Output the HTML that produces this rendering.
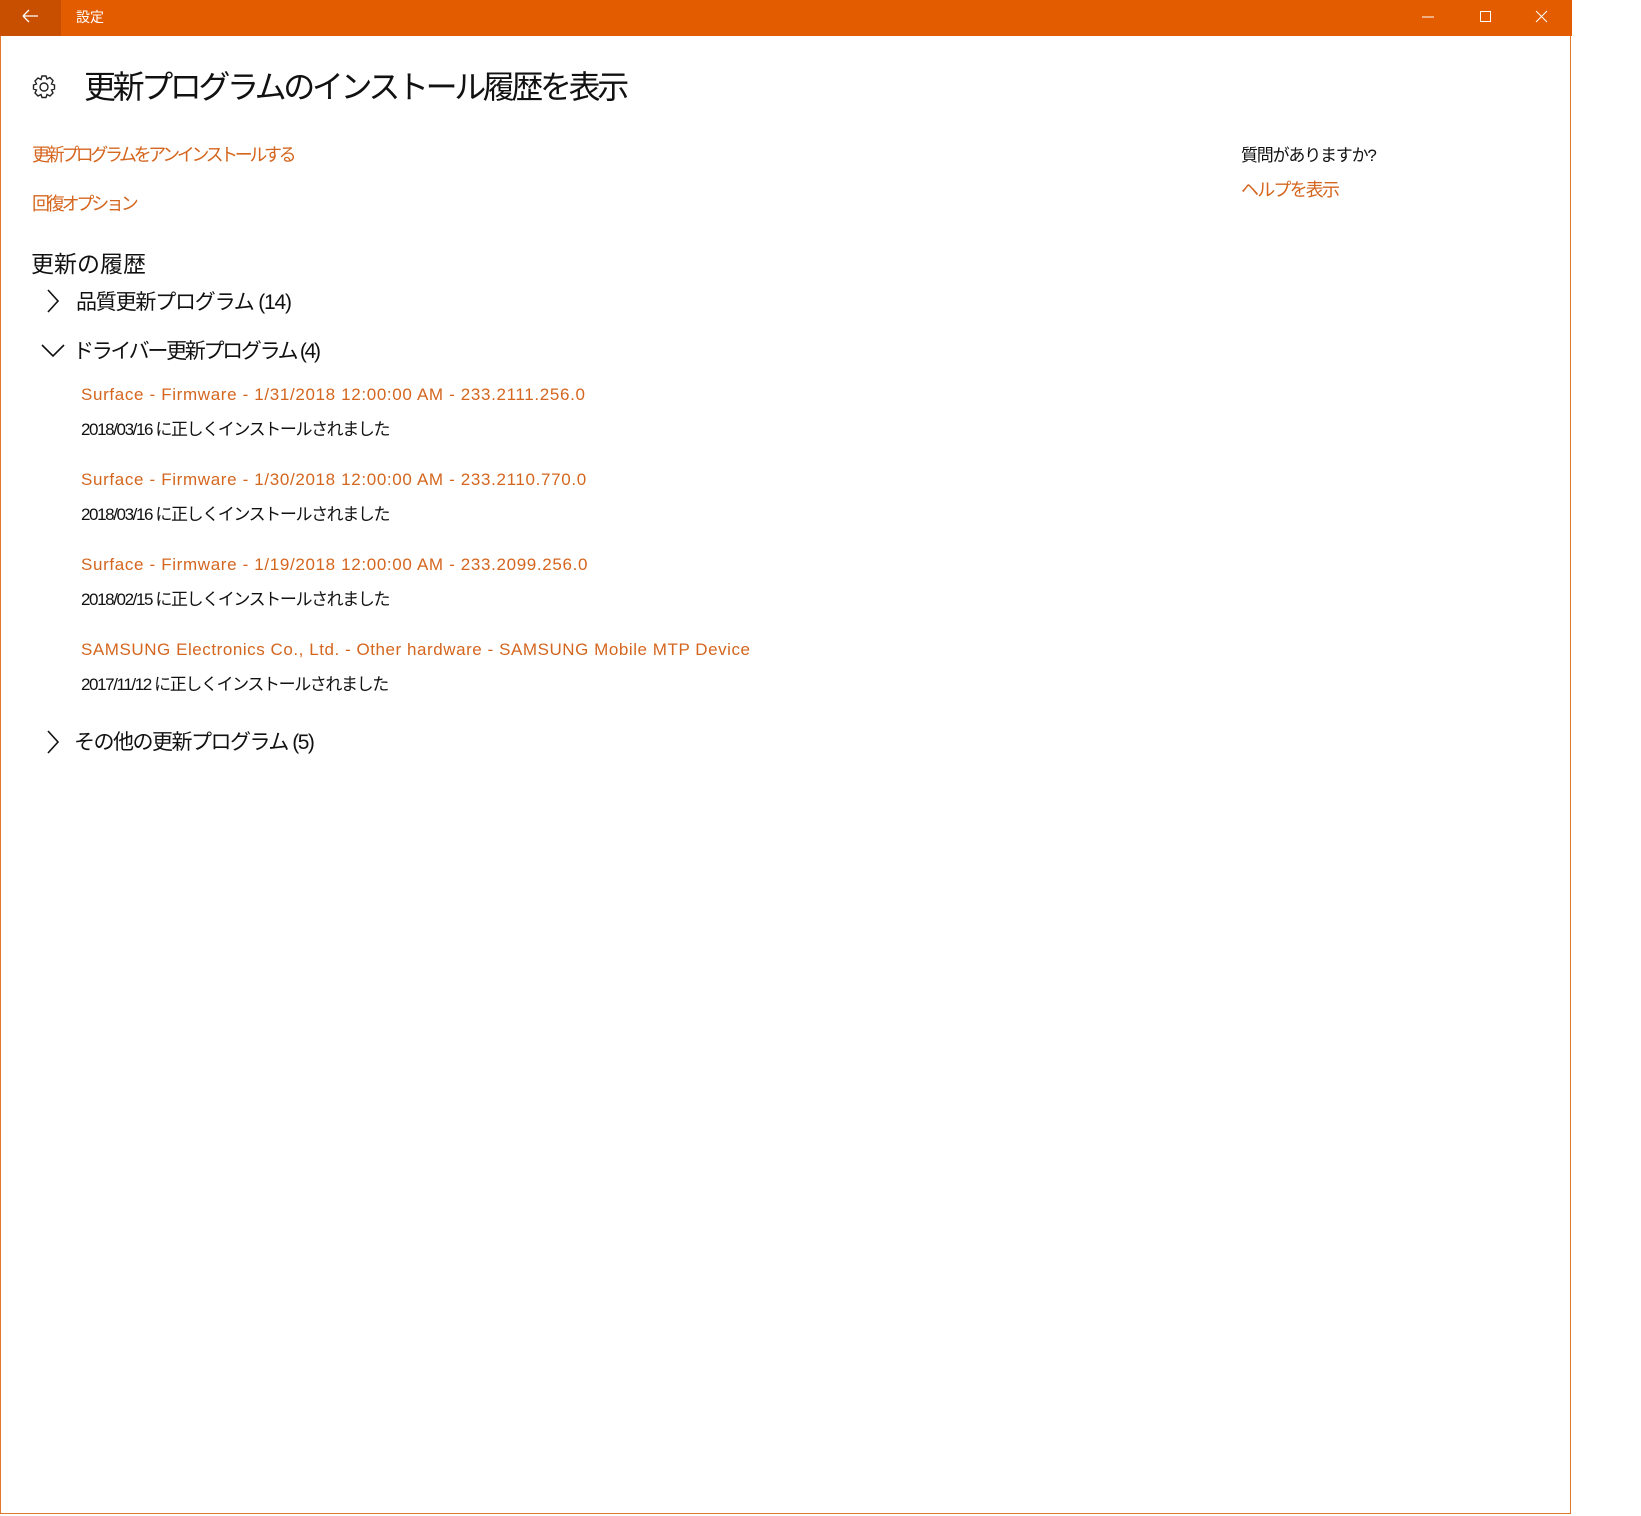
<!DOCTYPE html>
<html><head><meta charset="utf-8"><style>
body{margin:0;width:1641px;height:1516px;background:#fff;position:relative;overflow:hidden;font-family:"Liberation Sans","Noto Sans CJK JP",sans-serif;color:#111}
.win{position:absolute;left:0;top:0;width:1571px;height:1514px;border:1px solid #e2782d;border-top:none;box-sizing:border-box}
.bar{position:absolute;left:0;top:0;width:1572px;height:36px;background:#e35c00}
.back{position:absolute;left:0;top:0;width:61px;height:36px;background:#c94f00}
.t{position:absolute;white-space:nowrap}
.o{color:#d4661f}
</style></head><body>
<div class="win"></div>
<div class="bar"><div class="back"><svg width="61" height="36"><path d="M23 16h15M23 16l6-6M23 16l6 6" stroke="#fff" stroke-width="1.3" fill="none"/></svg></div>
<div class="t" style="left:76px;top:7px;color:#fff;font-size:14px">設定</div>
<svg style="position:absolute;left:1413px;top:6px" width="140" height="24"><path d="M9 11h12" stroke="#fff"/><path d="M67.5 5.5h10v10h-10z" stroke="#fff" fill="none"/><path d="M123 5l11 11M134 5l-11 11" stroke="#fff" fill="none"/></svg>
</div>
<svg style="position:absolute;left:30px;top:73px" width="28" height="28" viewBox="0 0 28 28"><g fill="none" stroke="#222" stroke-width="1.4"><circle cx="14" cy="14" r="4"/><path d="M12 3h4l1 3 3-1.5 3 3L21.5 11l3 1v4l-3 1 1.5 3-3 3-3-1.5-1 3h-4l-1-3-3 1.5-3-3L6.5 17l-3-1v-4l3-1L5 8l3-3 3 1.5z"/></g></svg>
<div class="t" style="left:84px;top:62px;font-size:32px;letter-spacing:-3.4px">更新プログラムのインストール履歴を表示</div>
<div class="t o" style="left:32px;top:141px;font-size:18px;letter-spacing:-3.4px">更新プログラムをアンインストールする</div>
<div class="t o" style="left:32px;top:190px;font-size:18px;letter-spacing:-3.2px">回復オプション</div>
<div class="t" style="left:31px;top:245px;font-size:23px">更新の履歴</div>
<svg style="position:absolute;left:44px;top:288px" width="20" height="26"><path d="M4 2l10 11L4 24" stroke="#111" stroke-width="1.6" fill="none"/></svg>
<div class="t" style="left:76px;top:286px;font-size:21px;letter-spacing:-1.2px">品質更新プログラム (14)</div>
<svg style="position:absolute;left:40px;top:341px" width="26" height="18"><path d="M2 4l11 11L24 4" stroke="#111" stroke-width="1.6" fill="none"/></svg>
<div class="t" style="left:73px;top:335px;font-size:21px;letter-spacing:-2.3px">ドライバー更新プログラム (4)</div>
<div class="t o" style="left:81px;top:385px;font-size:17px;letter-spacing:0.65px">Surface - Firmware - 1/31/2018 12:00:00 AM - 233.2111.256.0</div>
<div class="t" style="left:81px;top:415px;font-size:17px;letter-spacing:-1.4px">2018/03/16 に正しくインストールされました</div>
<div class="t o" style="left:81px;top:470px;font-size:17px;letter-spacing:0.65px">Surface - Firmware - 1/30/2018 12:00:00 AM - 233.2110.770.0</div>
<div class="t" style="left:81px;top:500px;font-size:17px;letter-spacing:-1.4px">2018/03/16 に正しくインストールされました</div>
<div class="t o" style="left:81px;top:555px;font-size:17px;letter-spacing:0.65px">Surface - Firmware - 1/19/2018 12:00:00 AM - 233.2099.256.0</div>
<div class="t" style="left:81px;top:585px;font-size:17px;letter-spacing:-1.4px">2018/02/15 に正しくインストールされました</div>
<div class="t o" style="left:81px;top:640px;font-size:17px;letter-spacing:0.55px">SAMSUNG Electronics Co., Ltd. - Other hardware - SAMSUNG Mobile MTP Device</div>
<div class="t" style="left:81px;top:670px;font-size:17px;letter-spacing:-1.4px">2017/11/12 に正しくインストールされました</div>
<svg style="position:absolute;left:44px;top:729px" width="20" height="26"><path d="M4 2l10 11L4 24" stroke="#111" stroke-width="1.6" fill="none"/></svg>
<div class="t" style="left:74px;top:726px;font-size:21px;letter-spacing:-1.5px">その他の更新プログラム (5)</div>
<div class="t" style="left:1241px;top:141px;font-size:17px;letter-spacing:-1.2px">質問がありますか?</div>
<div class="t o" style="left:1241px;top:176px;font-size:18px;letter-spacing:-1.8px">ヘルプを表示</div>
</body></html>
